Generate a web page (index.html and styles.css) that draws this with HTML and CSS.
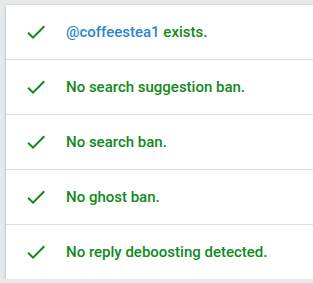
FILE: index.html
```html
<!DOCTYPE html>
<html>
<head>
<meta charset="utf-8">
<link rel="stylesheet" href="styles.css">
</head>
<body>
<ul class="card">
  <li class="row"><svg class="check" viewBox="0 0 24 24"><path d="M9 16.17L4.83 12l-1.42 1.41L9 19 21 7l-1.41-1.41z"/></svg><span class="msg"><a class="user">@coffeestea1</a> exists.</span></li>
  <li class="row"><svg class="check" viewBox="0 0 24 24"><path d="M9 16.17L4.83 12l-1.42 1.41L9 19 21 7l-1.41-1.41z"/></svg><span class="msg">No search suggestion ban.</span></li>
  <li class="row"><svg class="check" viewBox="0 0 24 24"><path d="M9 16.17L4.83 12l-1.42 1.41L9 19 21 7l-1.41-1.41z"/></svg><span class="msg">No search ban.</span></li>
  <li class="row"><svg class="check" viewBox="0 0 24 24"><path d="M9 16.17L4.83 12l-1.42 1.41L9 19 21 7l-1.41-1.41z"/></svg><span class="msg">No ghost ban.</span></li>
  <li class="row"><svg class="check" viewBox="0 0 24 24"><path d="M9 16.17L4.83 12l-1.42 1.41L9 19 21 7l-1.41-1.41z"/></svg><span class="msg">No reply deboosting detected.</span></li>
</ul>
</body>
</html>
```
FILE: styles.css
```css
html, body {
  margin: 0;
  padding: 0;
  background: #e6e9ec;
}
body {
  padding: 5px 0 0 6px;
  font-family: Roboto, "Noto Sans", sans-serif;
}
.card {
  list-style: none;
  margin: 0;
  padding: 0;
  background: #fff;
  box-shadow: 0 1px 3px rgba(0,0,0,0.25);
}
.row {
  display: flex;
  align-items: center;
  height: 54px;
  border-bottom: 1px solid #e0e0e0;
  padding-left: 18px;
}
.row:last-child {
  border-bottom: none;
}
.check {
  width: 24px;
  height: 24px;
  fill: #118a1c;
  flex: none;
}
.msg {
  margin-left: 18px;
  font-size: 15px;
  font-weight: 500;
  color: #118a1c;
}
.user {
  color: #2a87d0;
}
```
